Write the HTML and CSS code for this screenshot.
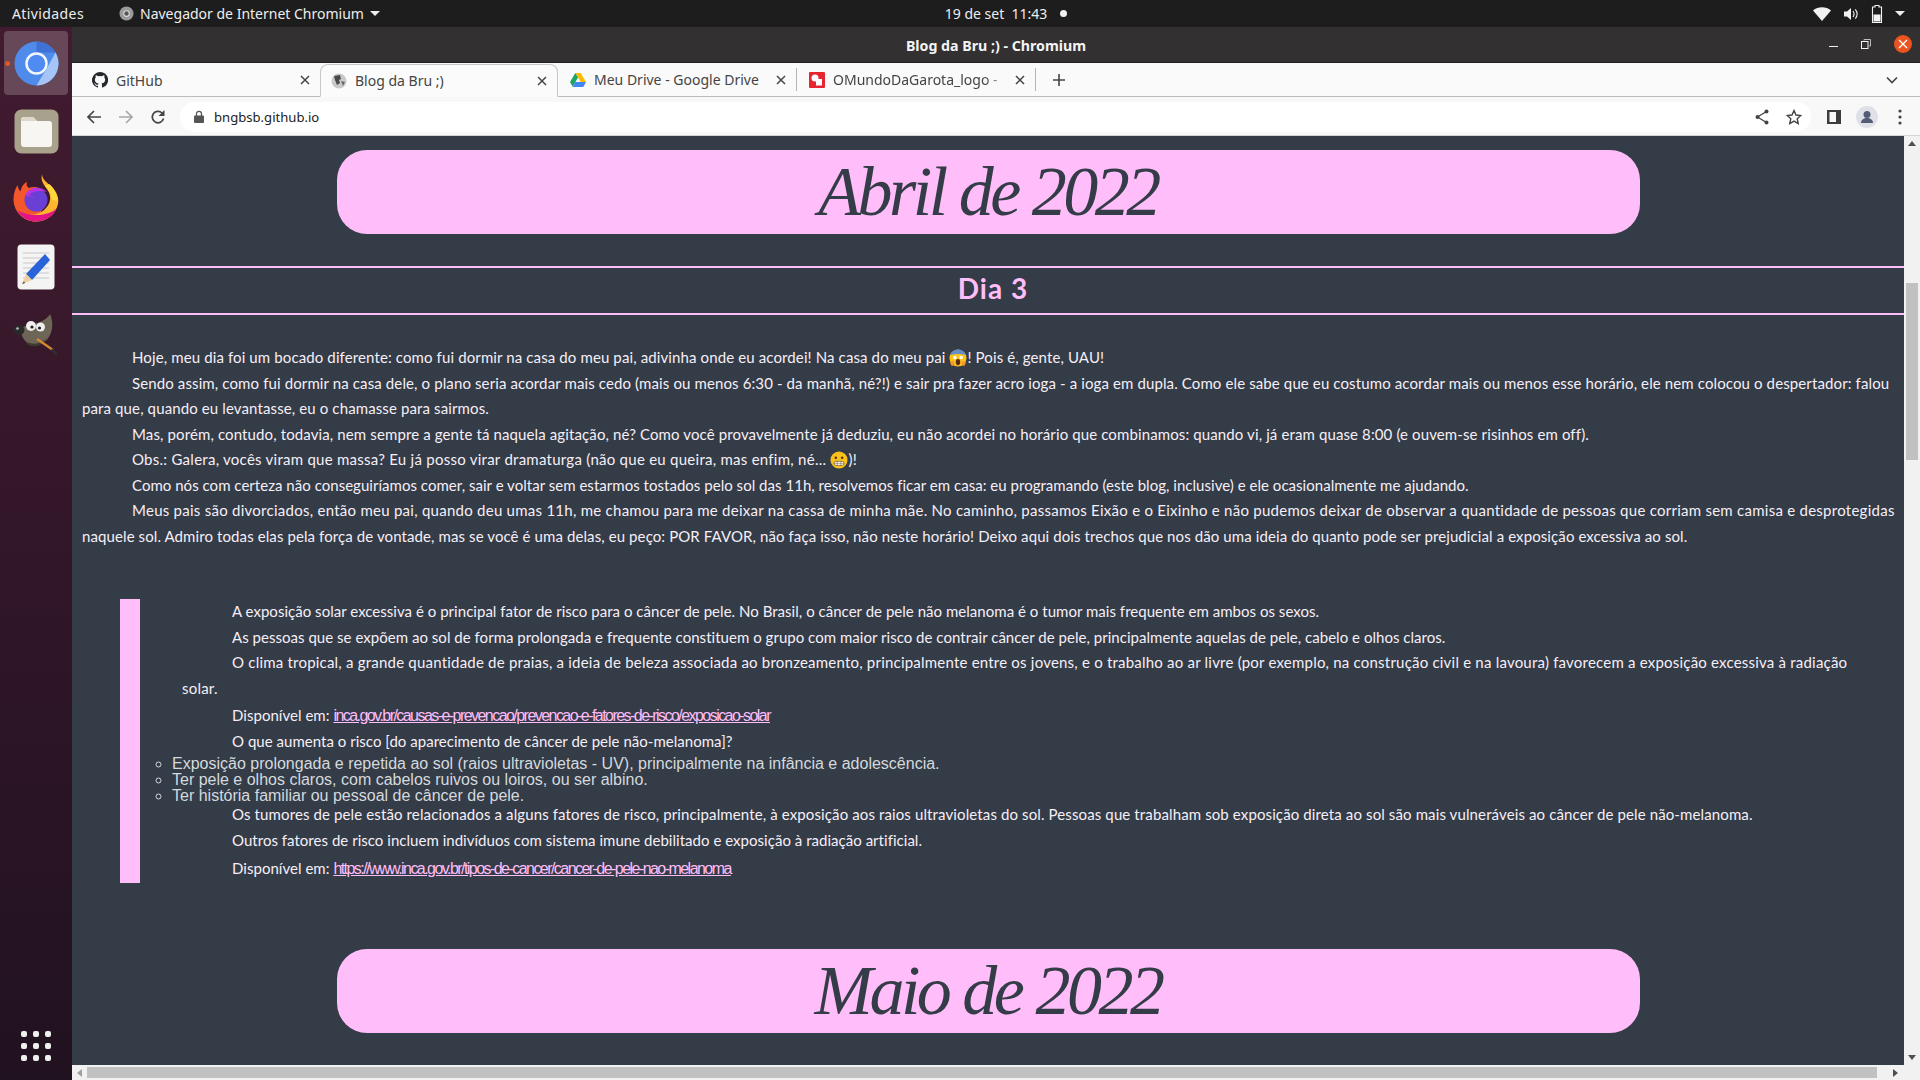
FILE: index.html
```html
<!DOCTYPE html>
<html lang="pt-BR">
<head>
  <meta charset="UTF-8">
  <title>Blog da Bru ;) - Chromium</title>
  <link rel="stylesheet" href="styles.css">
</head>
<body>
  <div class="topbar">
    <div class="top-left">
      <span class="activities">Atividades</span>
      <svg class="top-app-icon" viewBox="0 0 16 16"><circle cx="8" cy="8" r="7.500" fill="#9a9a9a"/><circle cx="8" cy="8" r="3" fill="#555" stroke="#ddd" stroke-width="1.200"/></svg>
      <span>Navegador de Internet Chromium</span>
      <span class="caret"></span>
    </div>
    <div class="top-clock">
      <span>19 de set&nbsp; 11:43</span>
      <span class="clock-dot"></span>
    </div>
    <div class="top-tray">
      <svg width="18" height="14" viewBox="0 0 18 14"><path d="M0 3.500C5 -.8 13 -.8 18 3.500L9 14z" fill="#f2f2f2"/></svg>
      <svg width="16" height="16" viewBox="0 0 16 16"><path d="M1 5.500h3L8 2v12L4 10.500H1z" fill="#f2f2f2"/><path d="M10 5c1.300 1.800 1.300 4.200 0 6M12.300 3.300c2.200 2.800 2.200 6.600 0 9.400" stroke="#f2f2f2" fill="none" stroke-width="1.100"/></svg>
      <svg width="12" height="18" viewBox="0 0 12 18"><path d="M4 .5h4v1.500h2.500v15.500h-9V2H4z" fill="none" stroke="#f2f2f2" stroke-width="1.100"/><rect x="2.500" y="9.500" width="7" height="7" fill="#f2f2f2"/></svg>
      <span class="caret"></span>
    </div>
  </div>

  <div class="desktop">
    <nav class="dock">
      <div class="dock-item active">
        <span class="running-dot"></span>
        <svg width="45" height="45" viewBox="0 0 45 45">
          <circle cx="22.500" cy="22.500" r="22" fill="#4f8bea"/>
          <path d="M22.500 .5a22 22 0 0 1 19 11H22.500z" fill="#3e72d6"/>
          <path d="M41.500 11.500a22 22 0 0 1-19 33L33 27z" fill="#a6c5f7"/>
          <circle cx="22.500" cy="22.500" r="10" fill="#4f8bf0" stroke="#f2f6ff" stroke-width="2.500"/>
        </svg>
      </div>
      <div class="dock-item">
        <svg width="45" height="45" viewBox="0 0 45 45">
          <rect x=".5" y=".5" width="44" height="44" rx="7" fill="#a8a18c"/>
          <path d="M7 11a3 3 0 0 1 3-3h9l4 4h12a3 3 0 0 1 3 3v20a3 3 0 0 1-3 3H10a3 3 0 0 1-3-3z" fill="#f7f6f3"/>
          <path d="M7 11a3 3 0 0 1 3-3h9l4 4H7z" fill="#dcd8cc"/>
        </svg>
      </div>
      <div class="dock-item dock-firefox">
        <svg width="46" height="48" viewBox="0 0 46 48">
          <path d="M23 47.500C10 47.500 .5 37 .5 25.500.5 20 2 15 4.500 11c.5 3 1.500 5 3 6.500C8.500 12.500 11 9 14 8c-1 3 0 5 2 6 3-1.500 7-1.500 10 0 7 3.500 9 12 5 18" fill="#f4572c"/>
          <path d="M29 0c0 6 6 9 10 13 5 5 7 11 6 17-2 10-11 17.500-22 17.500-8 0-15-4-19-11 7 5 17 6 25 1 7-4.500 10-12 7-19C33 12 27 9 29 0z" fill="#ffb52e"/>
          <path d="M4 36.500c4 7 11 11 19 11 9 0 17-5 20.500-13C38 40 22 45 4 36.500z" fill="#e31587"/>
          <path d="M36 10c5 4 8 10 9 17l-6-1c-1-5-3-11-7-14z" fill="#ffd93b"/>
          <circle cx="23" cy="26" r="11.500" fill="#6a3fd6"/>
          <path d="M12 21c4-8 15-10 22-3-7-2-14-1-18 3 1 1 3 1 6 1-2 1-7 1-10-1z" fill="#b833e1"/>
        </svg>
      </div>
      <div class="dock-item">
        <svg width="38" height="46" viewBox="0 0 38 46">
          <rect x=".5" y=".5" width="37" height="45" rx="4" fill="#f4f4f4"/>
          <path d="M6 9h26M6 14h26M6 19h26M6 24h26M6 29h26M6 34h26" stroke="#c9c9c9"/>
          <path d="M28 10l5 6-18 20-6-6z" fill="#2a63d8"/>
          <path d="M9 30l6 6-10 4z" fill="#efcf9f"/>
          <path d="M7 37.500l-2 2.500 3-1z" fill="#333"/>
        </svg>
      </div>
      <div class="dock-item">
        <svg width="46" height="42" viewBox="0 0 46 42">
          <path d="M8 14c6-3 12-4 17-5 5-2 10-5 12-9 3 6 3 15 0 21-3 7-10 11-18 10C13 30 7 22 8 14z" fill="#6d6556"/>
          <path d="M12 27c6 4 16 4 22-3-3 6-9 9-15 8-3 0-5-2-7-5z" fill="#3f3a30"/>
          <ellipse cx="6" cy="16" rx="5.500" ry="5" fill="#2a2a2a"/>
          <circle cx="4.500" cy="14.500" r="1.300" fill="#bbb"/>
          <circle cx="18" cy="12" r="5" fill="#efefef"/><circle cx="19" cy="13" r="1.600" fill="#222"/>
          <circle cx="27.500" cy="13" r="4.500" fill="#efefef"/><circle cx="26.500" cy="14" r="1.600" fill="#222"/>
          <path d="M24 25l16 11" stroke="#d88b2e" stroke-width="2.200"/>
          <path d="M39 35l5 6" stroke="#2f2f2f" stroke-width="2.600"/>
        </svg>
      </div>
      <div class="dock-apps">
        <span></span><span></span><span></span>
        <span></span><span></span><span></span>
        <span></span><span></span><span></span>
      </div>
    </nav>

    <div class="browser">
      <div class="titlebar">
        <span class="window-title">Blog da Bru ;) - Chromium</span>
        <div class="window-buttons">
          <span class="win-min"></span>
          <svg class="win-restore" width="10" height="10" viewBox="0 0 10 10"><path d="M3 1.500V.5h6.500V7H8" fill="none" stroke="#bbb"/><rect x=".5" y="2.500" width="6.500" height="7" fill="none" stroke="#f4f4f4"/></svg>
          <span class="win-close">
            <svg width="10" height="10" viewBox="0 0 10 10"><path d="M1 1l8 8M9 1l-8 8" stroke="#fff" stroke-width="1.300"/></svg>
          </span>
        </div>
      </div>

      <div class="tabstrip">
        <div class="tab tab-first">
          <svg class="favicon" viewBox="0 0 16 16"><path fill="#24292e" d="M8 0a8 8 0 0 0-2.530 15.590c.4.070.55-.170.55-.380v-1.340c-2.230.480-2.700-1.070-2.700-1.070-.360-.930-.890-1.170-.890-1.170-.730-.500.060-.490.060-.490.800.060 1.230.830 1.230.830.710 1.230 1.870.870 2.330.660.070-.520.280-.870.510-1.070-1.780-.200-3.640-.890-3.640-3.950 0-.870.310-1.590.820-2.150-.080-.200-.360-1.020.080-2.120 0 0 .670-.210 2.200.820a7.600 7.600 0 0 1 4 0c1.530-1.040 2.200-.820 2.200-.820.440 1.100.160 1.920.080 2.120.510.560.820 1.270.820 2.150 0 3.070-1.870 3.750-3.650 3.950.290.250.540.730.540 1.480v2.200c0 .210.150.460.550.380A8 8 0 0 0 8 0z"/></svg>
          <span class="tab-label">GitHub</span>
          <svg class="tab-close" viewBox="0 0 10 10"><path d="M1 1l8 8M9 1l-8 8" stroke="#444" stroke-width="1.500"/></svg>
        </div>
        <div class="tab tab-active">
          <svg class="favicon" viewBox="0 0 16 16"><circle cx="8" cy="8" r="7.500" fill="#c9c9c9"/><path d="M3 3l6-1 1 4-2 1 1 3-3 2-2-5z" fill="#4a4a4a"/><path d="M10 8l4 1-2 4z" fill="#6a6a6a"/></svg>
          <span class="tab-label">Blog da Bru ;)</span>
          <svg class="tab-close" viewBox="0 0 10 10"><path d="M1 1l8 8M9 1l-8 8" stroke="#444" stroke-width="1.500"/></svg>
        </div>
        <div class="tab tab-sep">
          <svg class="favicon" viewBox="0 0 16 14"><path d="M5.300 0h5.400L16 9h-5.300z" fill="#fbbc04"/><path d="M5.300 0L0 9l2.700 4.700L8 4.500z" fill="#1fa463"/><path d="M2.700 14h10.600L16 9H5.300z" fill="#4285f4"/></svg>
          <span class="tab-label">Meu Drive - Google Drive</span>
          <svg class="tab-close" viewBox="0 0 10 10"><path d="M1 1l8 8M9 1l-8 8" stroke="#444" stroke-width="1.500"/></svg>
        </div>
        <div class="tab tab-sep">
          <svg class="favicon" viewBox="0 0 16 16"><rect width="16" height="16" rx="1" fill="#e5262f"/><circle cx="6" cy="6" r="3.500" fill="#fff"/><rect x="7" y="7" width="6" height="6.500" fill="#fff"/></svg>
          <span class="tab-label tab-fade">OMundoDaGarota_logo -</span>
          <svg class="tab-close" viewBox="0 0 10 10"><path d="M1 1l8 8M9 1l-8 8" stroke="#444" stroke-width="1.500"/></svg>
        </div>
        <svg class="new-tab" width="14" height="14" viewBox="0 0 14 14"><path d="M7 1v12M1 7h12" stroke="#444" stroke-width="1.600"/></svg>
        <svg class="tab-list" width="12" height="8" viewBox="0 0 12 8"><path d="M1 1.500l5 5 5-5" stroke="#444" stroke-width="1.600" fill="none"/></svg>
      </div>

      <div class="toolbar">
        <svg class="tool-back" width="16" height="16" viewBox="0 0 16 16"><path d="M15 8H2M8 2L2 8l6 6" stroke="#444" stroke-width="1.700" fill="none"/></svg>
        <svg class="tool-forward" width="16" height="16" viewBox="0 0 16 16"><path d="M1 8h13M8 2l6 6-6 6" stroke="#a8a8a8" stroke-width="1.700" fill="none"/></svg>
        <svg class="tool-reload" width="16" height="16" viewBox="0 0 16 16"><path d="M13.500 9.500A5.700 5.700 0 1 1 12 4" stroke="#444" stroke-width="1.700" fill="none"/><path d="M14.500 1v6h-6z" fill="#444"/></svg>
        <div class="omnibox">
          <svg width="10" height="13" viewBox="0 0 10 13"><path d="M2.500 6V3.800a2.500 2.500 0 0 1 5 0V6" stroke="#555" stroke-width="1.300" fill="none"/><rect y="5.500" width="10" height="7.500" rx="1" fill="#555"/></svg>
          <span class="url">bngbsb.github.io</span>
          <svg class="omni-share" width="16" height="16" viewBox="0 0 16 16"><path d="M12.500 2.500L3.500 8l9 5.500" stroke="#444" stroke-width="1.300" fill="none"/><circle cx="12.500" cy="2.500" r="2" fill="#444"/><circle cx="3.500" cy="8" r="2" fill="#444"/><circle cx="12.500" cy="13.500" r="2" fill="#444"/></svg>
          <svg class="omni-star" width="16" height="16" viewBox="0 0 16 16"><path d="M8 1.500l2 4.500 4.800.5-3.600 3.200 1 4.800L8 12.100l-4.200 2.400 1-4.800L1.200 6.500 6 6z" stroke="#444" stroke-width="1.400" fill="none"/></svg>
        </div>
        <svg class="tool-panel" width="14" height="14" viewBox="0 0 14 14"><path d="M0 0h14v14H0zM2.500 2v10H9V2z" fill="#3c3c3c" fill-rule="evenodd"/></svg>
        <svg class="tool-avatar" width="22" height="22" viewBox="0 0 22 22"><circle cx="11" cy="11" r="11" fill="#e0e1e8"/><circle cx="11" cy="8.500" r="3.500" fill="#545b75"/><path d="M5 17c0-3.500 3-5 6-5s6 1.500 6 5z" fill="#545b75"/></svg>
        <svg class="tool-menu" width="4" height="16" viewBox="0 0 4 16"><circle cx="2" cy="2" r="1.600" fill="#444"/><circle cx="2" cy="8" r="1.600" fill="#444"/><circle cx="2" cy="14" r="1.600" fill="#444"/></svg>
      </div>

      <div class="viewport">
        <div class="page-row">
          <main class="page">
            <h1 class="month">Abril de 2022</h1>
            <h2 class="day">Dia 3</h2>

            <p class="entry">Hoje, meu dia foi um bocado diferente: como fui dormir na casa do meu pai, adivinha onde eu acordei! Na casa do meu pai <svg class="emoji" viewBox="0 0 20 20"><circle cx="10" cy="10" r="9.500" fill="#fcc21b"/><path d="M1.500 7C3 2 7 .5 10 .5S17 2 18.500 7C15 5 5 5 1.500 7z" fill="#5f8fd0"/><circle cx="6.500" cy="9.500" r="2" fill="#fff"/><circle cx="13.500" cy="9.500" r="2" fill="#fff"/><ellipse cx="10" cy="14.500" rx="2.500" ry="3.500" fill="#5a2a12"/><path d="M1 15l4-2 1 5-3 1zM19 15l-4-2-1 5 3 1z" fill="#f79329"/></svg>! Pois é, gente, UAU!</p>
            <p class="entry">Sendo assim, como fui dormir na casa dele, o plano seria acordar mais cedo (mais ou menos 6:30 - da manhã, né?!) e sair pra fazer acro ioga - a ioga em dupla. Como ele sabe que eu costumo acordar mais ou menos esse horário, ele nem colocou o despertador: falou<br>para que, quando eu levantasse, eu o chamasse para sairmos.</p>
            <p class="entry">Mas, porém, contudo, todavia, nem sempre a gente tá naquela agitação, né? Como você provavelmente já deduziu, eu não acordei no horário que combinamos: quando vi, já eram quase 8:00 (e ouvem-se risinhos em off).</p>
            <p class="entry entry-wide">Obs.: Galera, vocês viram que massa? Eu já posso virar dramaturga (não que eu queira, mas enfim, né... <svg class="emoji" viewBox="0 0 20 20"><circle cx="10" cy="10" r="9.500" fill="#fcc21b"/><circle cx="6.500" cy="7.500" r="1.500" fill="#5a3a12"/><circle cx="13.500" cy="7.500" r="1.500" fill="#5a3a12"/><rect x="4.500" y="11.500" width="11" height="4.500" rx="2" fill="#fff" stroke="#5a3a12" stroke-width=".7"/><path d="M4.500 13.700h11M8 11.500v4.500M12 11.500v4.500" stroke="#5a3a12" stroke-width=".5"/></svg>)!</p>
            <p class="entry entry-tight">Como nós com certeza não conseguiríamos comer, sair e voltar sem estarmos tostados pelo sol das 11h, resolvemos ficar em casa: eu programando (este blog, inclusive) e ele ocasionalmente me ajudando.</p>
            <p class="entry entry-wide">Meus pais são divorciados, então meu pai, quando deu umas 11h, me chamou para me deixar na cassa de minha mãe. No caminho, passamos Eixão e o Eixinho e não pudemos deixar de observar a quantidade de pessoas que corriam sem camisa e desprotegidas<br><span class="line-normal">naquele sol. Admiro todas elas pela força de vontade, mas se você é uma delas, eu peço: POR FAVOR, não faça isso, não neste horário! Deixo aqui dois trechos que nos dão uma ideia do quanto pode ser prejudicial a exposição excessiva ao sol.</span></p>

            <blockquote class="quote">
              <p class="entry entry-tight">A exposição solar excessiva é o principal fator de risco para o câncer de pele. No Brasil, o câncer de pele não melanoma é o tumor mais frequente em ambos os sexos.</p>
              <p class="entry entry-tight">As pessoas que se expõem ao sol de forma prolongada e frequente constituem o grupo com maior risco de contrair câncer de pele, principalmente aquelas de pele, cabelo e olhos claros.</p>
              <p class="entry entry-wide">O clima tropical, a grande quantidade de praias, a ideia de beleza associada ao bronzeamento, principalmente entre os jovens, e o trabalho ao ar livre (por exemplo, na construção civil e na lavoura) favorecem a exposição excessiva à radiação<br>solar.</p>
              <p class="entry entry-tight entry-source">Disponível em: <a class="source" href="#">inca.gov.br/causas-e-prevencao/prevencao-e-fatores-de-risco/exposicao-solar</a></p>
              <p class="entry entry-tight">O que aumenta o risco [do aparecimento de câncer de pele não-melanoma]?</p>
              <ul class="risks">
                <li>Exposição prolongada e repetida ao sol (raios ultravioletas - UV), principalmente na infância e adolescência.</li>
                <li>Ter pele e olhos claros, com cabelos ruivos ou loiros, ou ser albino.</li>
                <li>Ter história familiar ou pessoal de câncer de pele.</li>
              </ul>
              <p class="entry">Os tumores de pele estão relacionados a alguns fatores de risco, principalmente, à exposição aos raios ultravioletas do sol. Pessoas que trabalham sob exposição direta ao sol são mais vulneráveis ao câncer de pele não-melanoma.</p>
              <p class="entry entry-tight">Outros fatores de risco incluem indivíduos com sistema imune debilitado e exposição à radiação artificial.</p>
              <p class="entry entry-tight entry-source-last">Disponível em: <a class="source" href="#">https://www.inca.gov.br/tipos-de-cancer/cancer-de-pele-nao-melanoma</a></p>
            </blockquote>

            <h1 class="month month-next">Maio de 2022</h1>
            <div class="rule-next"></div>
          </main>
          <div class="scroll-v">
            <span class="arrow-up"></span>
            <span class="thumb-v"></span>
            <span class="arrow-down"></span>
          </div>
        </div>
        <div class="scroll-h">
          <span class="arrow-left"></span>
          <span class="thumb-h"></span>
          <span class="arrow-right"></span>
        </div>
      </div>
    </div>
  </div>
</body>
</html>
```

FILE: styles.css
```css
* {
  box-sizing: border-box;
}
html, body {
  margin: 0;
  height: 1080px;
  overflow: hidden;
}
body {
  display: flex;
  flex-direction: column;
  font-family: "Noto Sans", sans-serif;
  background: #333c47;
}

/* gnome top bar */
.topbar {
  height: 27px;
  background: #1d1d1d;
  color: #eeeeee;
  font-size: 14px;
  display: grid;
  grid-template-columns: 1fr auto 1fr;
  align-items: center;
  padding: 0 12px;
}
.top-left {
  display: flex;
  align-items: center;
}
.activities {
  margin-right: 35px;
  letter-spacing: 0.4px;
}
.top-app-icon {
  width: 15px;
  height: 15px;
  margin-right: 6px;
}
.caret {
  width: 0;
  height: 0;
  border-left: 5px solid transparent;
  border-right: 5px solid transparent;
  border-top: 5px solid #eeeeee;
  margin-left: 6px;
}
.top-clock {
  display: flex;
  align-items: center;
  font-size: 14px;
  padding-left: 92px;
}
.clock-dot {
  width: 7px;
  height: 7px;
  border-radius: 50%;
  background: #f2f2f2;
  margin-left: 13px;
}
.top-tray {
  display: flex;
  align-items: center;
  justify-content: flex-end;
  gap: 12px;
  padding-right: 3px;
}
.top-tray .caret {
  margin-left: 0;
}

.desktop {
  flex: 1;
  display: flex;
  min-height: 0;
}

/* ubuntu dock */
.dock {
  width: 72px;
  flex: none;
  display: flex;
  flex-direction: column;
  align-items: center;
  padding-top: 2px;
  background: linear-gradient(#421b30, #211220);
}
.dock-item {
  width: 64px;
  height: 68px;
  display: flex;
  align-items: center;
  justify-content: center;
  position: relative;
}
.dock-item.active {
  height: 64px;
  margin: 2px 0;
  background: rgba(255, 255, 255, 0.2);
  border-radius: 4px;
}
.dock-firefox {
  padding-bottom: 2px;
}
.running-dot {
  position: absolute;
  left: 1px;
  top: 30px;
  width: 5px;
  height: 5px;
  border-radius: 50%;
  background: #e95420;
}
.dock-apps {
  margin-top: auto;
  margin-bottom: 19px;
  display: grid;
  grid-template-columns: repeat(3, 6px);
  gap: 6px;
}
.dock-apps span {
  height: 6px;
  border-radius: 2px;
  background: #f0f0ee;
}

.browser {
  flex: 1;
  min-width: 0;
  display: flex;
  flex-direction: column;
}

/* window title */
.titlebar {
  height: 36px;
  padding-top: 1px;
  background: #323031;
  display: flex;
  align-items: center;
  justify-content: center;
  position: relative;
  border-bottom: 1px solid #1f1f1f;
}
.window-title {
  color: #f4f4f4;
  font-size: 14.200px;
  font-weight: 700;
}
.window-buttons {
  position: absolute;
  right: 8px;
  top: 8px;
  display: flex;
  align-items: center;
  gap: 23px;
}
.win-min {
  width: 9px;
  height: 1px;
  background: #eee;
  margin-top: 4px;
}
.win-close {
  width: 18px;
  height: 18px;
  border-radius: 50%;
  background: #e95420;
  display: flex;
  align-items: center;
  justify-content: center;
}

/* chrome tabs */
.tabstrip {
  height: 34px;
  padding-top: 1px;
  background: #fafafa;
  border-bottom: 1px solid #bdbdbd;
  display: flex;
  align-items: stretch;
  position: relative;
  font-size: 14px;
  color: #444;
}
.tab {
  width: 239px;
  display: flex;
  align-items: center;
  padding: 0 7px 0 12px;
  position: relative;
}
.tab-first {
  width: 248px;
  padding-left: 20px;
}
.tab-active {
  width: 238px;
  background: #fbfbfb;
  border: 1px solid #c8c8c8;
  border-bottom: 1px solid #fbfbfb;
  border-radius: 8px 8px 0 0;
  margin-bottom: -1px;
  padding-left: 10px;
}
.tab-sep {
  border-right: 1px solid #b5b5b5;
  margin: 4px 0 5px;
}
.favicon {
  width: 16px;
  height: 16px;
  flex: none;
  margin-right: 8px;
}
.tab-label {
  flex: 1;
  white-space: nowrap;
  overflow: hidden;
}
.tab-fade {
  -webkit-mask-image: linear-gradient(90deg, #000 85%, transparent);
  mask-image: linear-gradient(90deg, #000 85%, transparent);
}
.tab-close {
  width: 10px;
  height: 10px;
  flex: none;
  margin: 0 3px 0 4px;
}
.new-tab {
  align-self: center;
  margin-left: 16px;
}
.tab-list {
  position: absolute;
  right: 22px;
  top: 13px;
}

/* chrome toolbar */
.toolbar {
  height: 39px;
  padding-top: 1px;
  background: #f8f8f8;
  border-bottom: 1px solid #d5d5d5;
  display: flex;
  align-items: center;
  padding-left: 14px;
}
.tool-forward, .tool-reload {
  margin-left: 16px;
}
.omnibox {
  width: 1631px;
  height: 30px;
  margin-left: 14px;
  background: #ffffff;
  border-radius: 15px;
  display: flex;
  align-items: center;
  padding: 0 9px 0 14px;
}
.url {
  margin-left: 10px;
  font-size: 13.100px;
  color: #222;
  flex: 1;
}
.omni-star {
  margin-left: 16px;
}
.tool-panel {
  margin-left: 16px;
}
.tool-avatar {
  margin-left: 15px;
}
.tool-menu {
  margin-left: 20px;
}

/* page */
.viewport {
  flex: 1;
  min-height: 0;
  display: flex;
  flex-direction: column;
}
.page-row {
  flex: 1;
  min-height: 0;
  display: flex;
}
.page {
  flex: 1;
  min-width: 0;
  overflow: hidden;
  background: #333c47;
  color: #f7eef7;
  font-family: "Lato", sans-serif;
  font-size: 15px;
  padding-top: 14px;
}
.month {
  width: 1303px;
  height: 84px;
  margin: 0 auto;
  background: #ffbdf9;
  border-radius: 30px;
  color: #333c47;
  font-family: "Liberation Serif", serif;
  font-style: italic;
  font-weight: 400;
  font-size: 70px;
  letter-spacing: -3.500px;
  line-height: 84px;
  text-align: center;
}
.month-next {
  margin-top: 66px;
}
.rule-next {
  height: 2px;
  background: #ffbdf9;
  margin-top: 32px;
}
.day {
  margin: 32px 0 0;
  padding-left: 10px;
  height: 49px;
  border-top: 2px solid #ffbdf9;
  border-bottom: 2px solid #ffbdf9;
  color: #ffbdf9;
  font-size: 28px;
  letter-spacing: 1px;
  line-height: 41px;
  font-weight: 700;
  text-align: center;
}
.page > .entry:first-of-type {
  margin-top: 30px;
}
.entry {
  margin: 0;
  padding: 0 10px;
  text-indent: 50px;
  line-height: 25.500px;
  letter-spacing: 0.120px;
  white-space: nowrap;
}
.entry-tight {
  letter-spacing: 0.030px;
}
.entry-wide {
  letter-spacing: 0.260px;
}
.quote .entry-wide {
  letter-spacing: 0.210px;
}
.line-normal {
  letter-spacing: 0.100px;
}
.entry-source {
  margin-top: 2px;
}
.entry-source-last {
  margin-top: 3px;
}
.quote {
  margin: 52px 0 0 48px;
  border-left: 20px solid #ffbdf9;
  padding: 0 0 0 32px;
  height: 284px;
}
.quote > .entry:first-child {
  margin-top: -2px;
}
.source {
  color: #ffbdf9;
  font-family: "Liberation Sans", sans-serif;
  font-size: 16px;
  letter-spacing: -1.550px;
}
.risks {
  margin: 2px 0 -2px;
  padding: 0;
  list-style: circle;
  font-family: "Liberation Sans", sans-serif;
  font-size: 16px;
  line-height: 16px;
  color: #d5d9de;
}
.emoji {
  width: 18px;
  height: 18px;
  vertical-align: -4px;
}

/* scrollbars */
.scroll-v {
  width: 16px;
  flex: none;
  background: #f1f1f1;
  display: flex;
  flex-direction: column;
  align-items: center;
  padding: 5px 0;
}
.arrow-up, .arrow-down {
  width: 0;
  height: 0;
  border-left: 4px solid transparent;
  border-right: 4px solid transparent;
}
.arrow-up {
  border-bottom: 5px solid #505050;
}
.arrow-down {
  border-top: 5px solid #505050;
  margin-top: auto;
}
.thumb-v {
  width: 12px;
  height: 177px;
  margin-top: 137px;
  background: #c1c1c1;
}
.scroll-h {
  height: 15px;
  flex: none;
  background: #f1f1f1;
  display: flex;
  align-items: center;
  padding: 0 22px 0 5px;
}
.arrow-left, .arrow-right {
  width: 0;
  height: 0;
  border-top: 4px solid transparent;
  border-bottom: 4px solid transparent;
}
.arrow-left {
  border-right: 5px solid #a0a0a0;
}
.arrow-right {
  border-left: 5px solid #505050;
  margin-left: auto;
}
.thumb-h {
  width: 1790px;
  height: 11px;
  margin-left: 5px;
  background: #c1c1c1;
}
```
